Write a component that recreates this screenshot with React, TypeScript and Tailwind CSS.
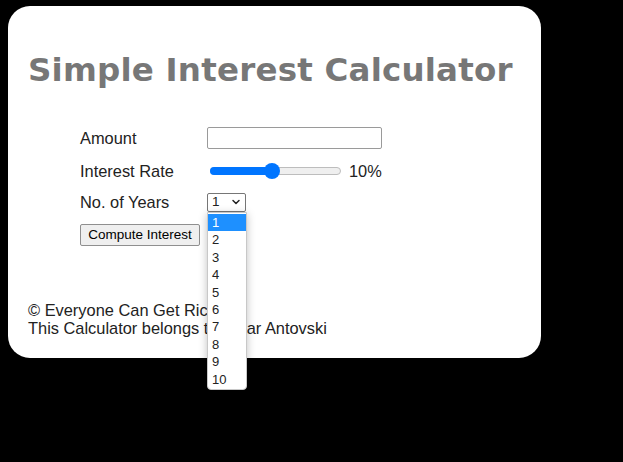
import { ChevronDown } from "lucide-react";

const years = [1, 2, 3, 4, 5, 6, 7, 8, 9, 10];

export default function App() {
  return (
    <div className="h-[462px] w-[623px] bg-black pl-[8px] pt-[6px] font-['Liberation_Sans',Arial,sans-serif] text-black">
      <div className="relative h-[352px] w-[533px] rounded-[22px] bg-white pl-[20px] pt-[48px]">
        <h1 className="font-['DejaVu_Sans',Verdana,sans-serif] text-[32.5px] font-bold leading-[33px] tracking-[0.2px] text-[#777777]">
          Simple Interest Calculator
        </h1>

        <div className="ml-[52px] mt-[39px] grid grid-cols-[127px_auto] grid-rows-[24px_22px_22px] items-center gap-y-[9.5px] text-[16.4px] leading-[20px] text-[#222]">
          <span>Amount</span>
          <input className="h-[22px] w-[175px] rounded-[2px] border border-[#9a9a9a] bg-white" />

          <span>Interest Rate</span>
          <div className="flex items-center">
            <div className="relative ml-[3px] h-[8px] w-[131px] rounded-full border border-[#bdbdbd] bg-[#efefef]">
              <div className="absolute left-[-1px] top-[-1px] h-[8px] w-[62px] rounded-full bg-[#0075ff]" />
              <div className="absolute left-[53px] top-[-5px] h-[16px] w-[16px] rounded-full bg-[#0075ff]" />
            </div>
            <span className="ml-[8px]">10%</span>
          </div>

          <span>No. of Years</span>
          <div className="relative">
            <div className="flex h-[19px] w-[39px] items-center justify-between rounded-[2px] border border-[#767676] pl-[4px] pr-[3px] text-[13.5px]">
              <span>1</span>
              <ChevronDown size={12} strokeWidth={3} />
            </div>
          </div>
        </div>

        <button className="ml-[52px] mt-[11px] h-[22px] w-[120px] rounded-[2px] border border-[#8f8f8f] bg-[#efefef] text-[13.5px] text-black">
          Compute Interest
        </button>

        <div className="mt-[55px] text-[16.4px] leading-[18px] text-[#222]">
          <p>© Everyone Can Get Rich</p>
          <p>This Calculator belongs to Petar Antovski</p>
        </div>

        <div className="absolute left-[199px] top-[206px] w-[40px] rounded-b-[4px] border border-[#c8c8c8] bg-white py-[1px] text-[13px] leading-[17.4px] text-[#222] shadow-[0_2px_8px_rgba(0,0,0,0.25)]">
          {years.map((y) => (
            <div
              key={y}
              className={y === 1 ? "bg-[#1e90ff] pl-[4px] text-white" : "pl-[4px]"}
            >
              {y}
            </div>
          ))}
        </div>
      </div>
    </div>
  );
}
